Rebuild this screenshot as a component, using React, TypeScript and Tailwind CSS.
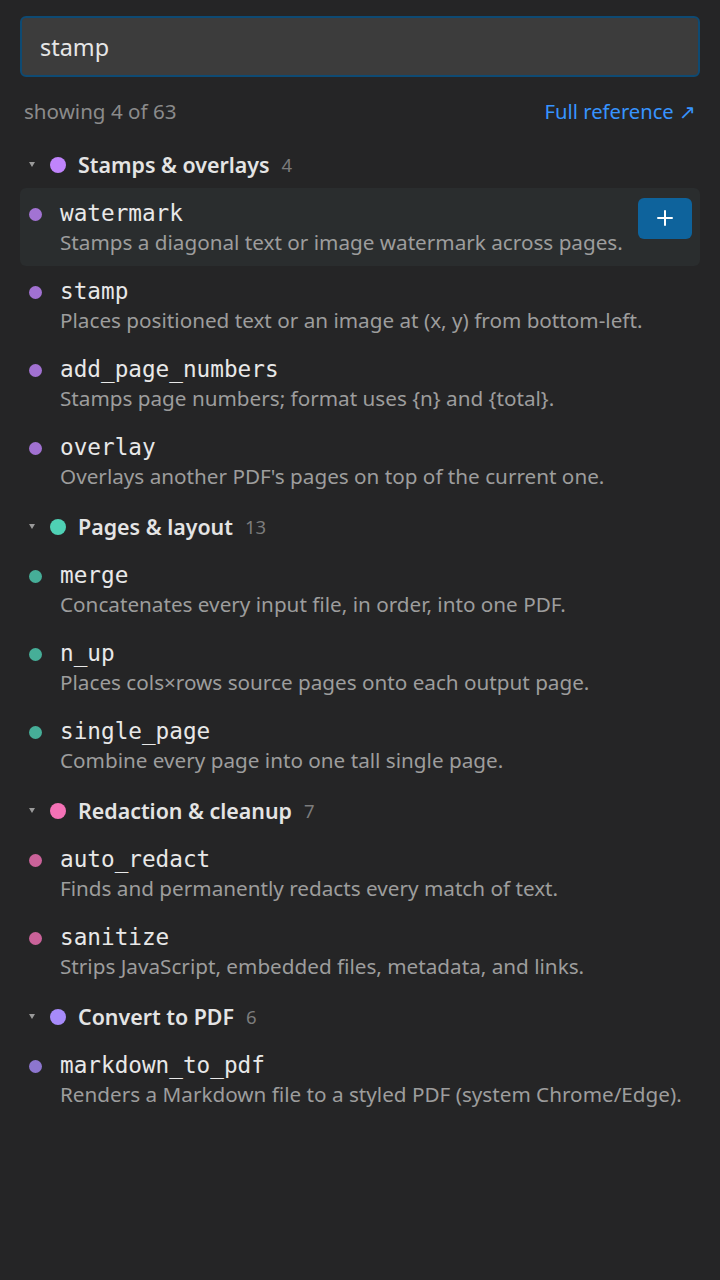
import { Plus } from "lucide-react";

type Item = { name: string; desc: string };
type Group = { title: string; count: number; dot: string; items: Item[] };

const groups: Group[] = [
  {
    title: "Stamps & overlays",
    count: 4,
    dot: "bg-[#c084fc]",
    items: [
      { name: "watermark", desc: "Stamps a diagonal text or image watermark across pages." },
      { name: "stamp", desc: "Places positioned text or an image at (x, y) from bottom-left." },
      { name: "add_page_numbers", desc: "Stamps page numbers; format uses {n} and {total}." },
      { name: "overlay", desc: "Overlays another PDF's pages on top of the current one." },
    ],
  },
  {
    title: "Pages & layout",
    count: 13,
    dot: "bg-[#4fd1b5]",
    items: [
      { name: "merge", desc: "Concatenates every input file, in order, into one PDF." },
      { name: "n_up", desc: "Places cols×rows source pages onto each output page." },
      { name: "single_page", desc: "Combine every page into one tall single page." },
    ],
  },
  {
    title: "Redaction & cleanup",
    count: 7,
    dot: "bg-[#f472b6]",
    items: [
      { name: "auto_redact", desc: "Finds and permanently redacts every match of text." },
      { name: "sanitize", desc: "Strips JavaScript, embedded files, metadata, and links." },
    ],
  },
  {
    title: "Convert to PDF",
    count: 6,
    dot: "bg-[#a78bfa]",
    items: [
      { name: "markdown_to_pdf", desc: "Renders a Markdown file to a styled PDF (system Chrome/Edge)." },
    ],
  },
];

function ToolRow({ item, dot, active }: { item: Item; dot: string; active: boolean }) {
  return (
    <div
      className={`relative flex items-start rounded-md px-2 h-[78px] ${
        active ? "bg-[#2a2d2e]" : ""
      }`}
    >
      <span className={`mt-[20px] ml-[1px] h-[13px] w-[13px] shrink-0 rounded-full opacity-80 ${dot}`} />
      <div className="ml-[18px] flex flex-col pt-[10px]">
        <span className="font-['DejaVu_Sans_Mono',monospace] text-[22.7px] leading-[30px] text-[#e8e8e8]">
          {item.name}
        </span>
        <span className="text-[20.7px] leading-[28px] text-[#9d9d9d]">{item.desc}</span>
      </div>
      {active && (
        <button className="absolute right-2 top-[10px] flex h-[41px] w-[54px] items-center justify-center rounded-md bg-[#0e639c] text-white">
          <Plus size={24} strokeWidth={2} />
        </button>
      )}
    </div>
  );
}

export default function App() {
  return (
    <div className="min-h-[1280px] w-[720px] bg-[#252526] px-5 pt-4 font-['Noto_Sans',sans-serif]">
      {/* Search */}
      <div className="flex h-[61px] items-center rounded-md border-2 border-[#0e4a73] bg-[#3c3c3c] px-[18px] pt-[2px]">
        <span className="text-[23.4px] text-[#e6e6e6]">stamp</span>
      </div>

      {/* Meta row */}
      <div className="mt-[19px] flex items-center justify-between px-1">
        <span className="text-[20.6px] text-[#8b8b8b]">showing 4 of 63</span>
        <span className="text-[20.2px] text-[#3794ff]">Full reference ↗</span>
      </div>

      {/* Groups */}
      <div className="mt-[15px] flex flex-col">
        {groups.map((g, gi) => (
          <div key={g.title} className={gi > 0 ? "mt-[4px]" : ""}>
            <div className="flex h-[46px] items-center pl-[9px]">
              <span className="w-0 h-0 border-x-[3.5px] border-x-transparent border-t-[5px] border-t-[#9a9a9a]" />
              <span className={`ml-[15px] h-[16px] w-[16px] rounded-full ${g.dot}`} />
              <span className="ml-[12px] text-[21.4px] font-semibold text-[#e4e4e4]">{g.title}</span>
              <span className="ml-[12px] text-[18.5px] text-[#7c7c7c]">{g.count}</span>
            </div>
            {g.items.map((it, i) => (
              <ToolRow key={it.name} item={it} dot={g.dot} active={gi === 0 && i === 0} />
            ))}
          </div>
        ))}
      </div>
    </div>
  );
}
